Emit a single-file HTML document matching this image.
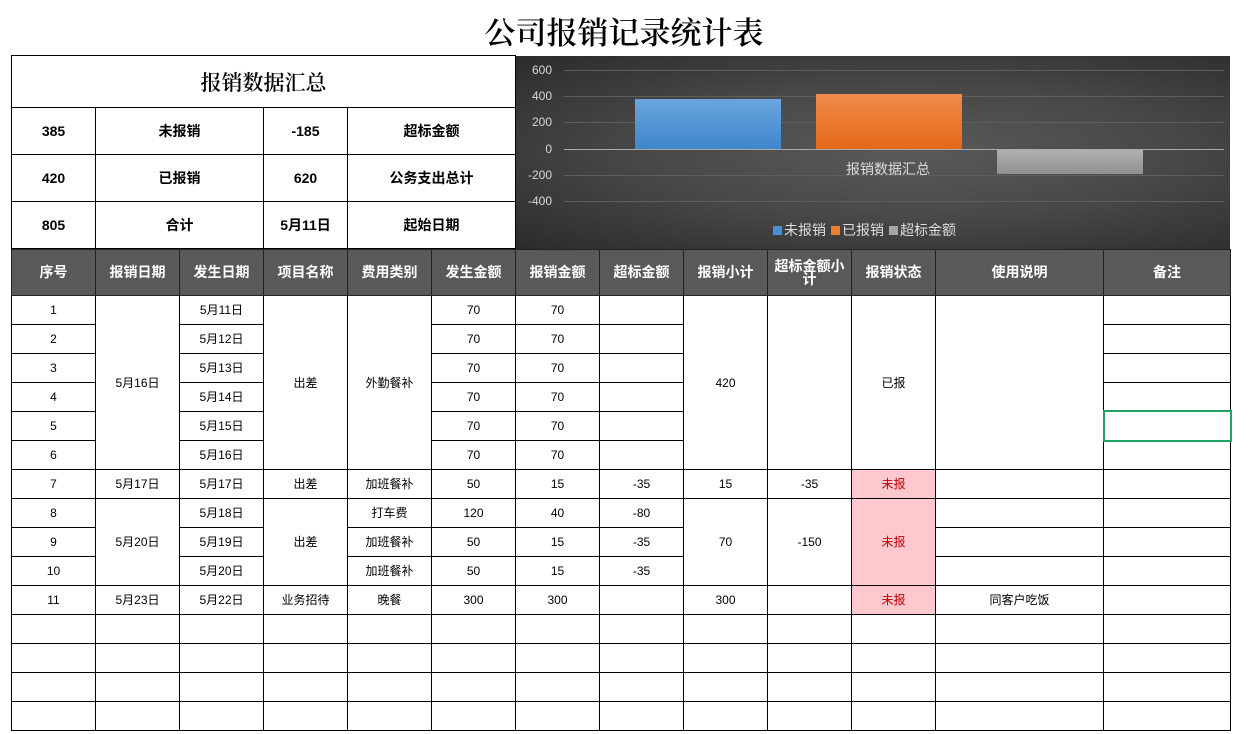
<!DOCTYPE html>
<html><head><meta charset="utf-8"><style>
body{margin:0;width:1248px;height:734px;overflow:hidden;background:#fff;font-family:"Liberation Sans","Noto Sans CJK SC",sans-serif;position:relative}
.title{position:absolute;left:0;width:1248px;top:8px;text-align:center;font-family:"Liberation Serif","Noto Serif CJK SC",serif;font-size:31px;font-weight:600;color:#000}
table{border-collapse:collapse;table-layout:fixed;position:absolute}
td{border:1px solid #000;text-align:center;padding:0;font-size:12px;color:#000;overflow:hidden}
#sum{left:11px;top:55px;width:505px}
#sum td{font-weight:bold;font-size:14px}
#sum .h{font-size:21px;font-family:"Liberation Serif","Noto Serif CJK SC",serif;font-weight:600}
#main{left:11px;top:249px;width:1220px}
#main tr.hd td{background:#595959;color:#fff;font-weight:bold;font-size:14px;border-color:#222;line-height:13px}
#main tr td{height:28px;line-height:14px}
.pk{background:#ffc7ce;color:#c00000}
#chart{position:absolute;left:516px;top:56px;width:714px;height:193px;background:radial-gradient(ellipse at 55% 50%,#5a5a5a 0%,#474747 50%,#2b2b2b 100%);overflow:hidden}
.gl{position:absolute;left:48px;right:6px;height:1px;background:#5e5e5e}
.yl{position:absolute;left:0;width:36px;text-align:right;color:#d8d8d8;font-size:12px}
.sel{position:absolute;left:1103px;top:410px;width:125px;height:28px;border:2px solid #21a366}
.lg{display:inline-block;width:9px;height:9px;margin:0 2px 0 5px}
</style></head><body>
<div class="title">公司报销记录统计表</div>
<table id="sum">
<colgroup><col style="width:84px"><col style="width:168px"><col style="width:84px"><col style="width:168px"></colgroup>
<tr><td colspan="4" class="h" style="height:51px">报销数据汇总</td></tr>
<tr><td style="height:46px">385</td><td>未报销</td><td>-185</td><td>超标金额</td></tr>
<tr><td style="height:46px">420</td><td>已报销</td><td>620</td><td>公务支出总计</td></tr>
<tr><td style="height:46px">805</td><td>合计</td><td>5月11日</td><td>起始日期</td></tr>
</table>
<div id="chart">
<div class="gl" style="top:14px"></div><div class="gl" style="top:40px"></div><div class="gl" style="top:66px"></div><div class="gl" style="top:93px;background:#aaa"></div><div class="gl" style="top:119px"></div><div class="gl" style="top:145px"></div>
<div class="yl" style="top:7px">600</div><div class="yl" style="top:33px">400</div><div class="yl" style="top:59px">200</div><div class="yl" style="top:86px">0</div><div class="yl" style="top:112px">-200</div><div class="yl" style="top:138px">-400</div>
<div style="position:absolute;left:119px;top:43px;width:146px;height:50px;background:linear-gradient(#6aa5de,#3f86cc)"></div>
<div style="position:absolute;left:300px;top:38px;width:146px;height:55px;background:linear-gradient(#f08a4b,#e46a17)"></div>
<div style="position:absolute;left:481px;top:94px;width:146px;height:24px;background:linear-gradient(#b0b0b0,#909090)"></div>
<div style="position:absolute;left:320px;top:103px;width:104px;text-align:center;color:#ddd;font-size:14px">报销数据汇总</div>
<div style="position:absolute;left:252px;top:164px;color:#ddd;font-size:14px;white-space:nowrap"><span class="lg" style="background:#4a8fd5"></span>未报销<span class="lg" style="background:#ed7d31"></span>已报销<span class="lg" style="background:#a5a5a5"></span>超标金额</div>
</div>
<table id="main">
<colgroup><col style="width:84px"><col style="width:84px"><col style="width:84px"><col style="width:84px"><col style="width:84px"><col style="width:84px"><col style="width:84px"><col style="width:84px"><col style="width:84px"><col style="width:84px"><col style="width:84px"><col style="width:168px"><col style="width:127px"></colgroup>
<tr class="hd"><td style="height:45px">序号</td><td>报销日期</td><td>发生日期</td><td>项目名称</td><td>费用类别</td><td>发生金额</td><td>报销金额</td><td>超标金额</td><td>报销小计</td><td>超标金额小计</td><td>报销状态</td><td>使用说明</td><td>备注</td></tr>
<tr><td>1</td><td rowspan="6">5月16日</td><td>5月11日</td><td rowspan="6">出差</td><td rowspan="6">外勤餐补</td><td>70</td><td>70</td><td></td><td rowspan="6">420</td><td rowspan="6"></td><td rowspan="6">已报</td><td rowspan="6"></td><td></td></tr>
<tr><td>2</td><td>5月12日</td><td>70</td><td>70</td><td></td><td></td></tr>
<tr><td>3</td><td>5月13日</td><td>70</td><td>70</td><td></td><td></td></tr>
<tr><td>4</td><td>5月14日</td><td>70</td><td>70</td><td></td><td></td></tr>
<tr><td>5</td><td>5月15日</td><td>70</td><td>70</td><td></td><td></td></tr>
<tr><td>6</td><td>5月16日</td><td>70</td><td>70</td><td></td><td></td></tr>
<tr><td>7</td><td>5月17日</td><td>5月17日</td><td>出差</td><td>加班餐补</td><td>50</td><td>15</td><td>-35</td><td>15</td><td>-35</td><td class="pk">未报</td><td></td><td></td></tr>
<tr><td>8</td><td rowspan="3">5月20日</td><td>5月18日</td><td rowspan="3">出差</td><td>打车费</td><td>120</td><td>40</td><td>-80</td><td rowspan="3">70</td><td rowspan="3">-150</td><td rowspan="3" class="pk">未报</td><td></td><td></td></tr>
<tr><td>9</td><td>5月19日</td><td>加班餐补</td><td>50</td><td>15</td><td>-35</td><td></td><td></td></tr>
<tr><td>10</td><td>5月20日</td><td>加班餐补</td><td>50</td><td>15</td><td>-35</td><td></td><td></td></tr>
<tr><td>11</td><td>5月23日</td><td>5月22日</td><td>业务招待</td><td>晚餐</td><td>300</td><td>300</td><td></td><td>300</td><td></td><td class="pk">未报</td><td>同客户吃饭</td><td></td></tr>
<tr><td></td><td></td><td></td><td></td><td></td><td></td><td></td><td></td><td></td><td></td><td></td><td></td><td></td></tr>
<tr><td></td><td></td><td></td><td></td><td></td><td></td><td></td><td></td><td></td><td></td><td></td><td></td><td></td></tr>
<tr><td></td><td></td><td></td><td></td><td></td><td></td><td></td><td></td><td></td><td></td><td></td><td></td><td></td></tr>
<tr><td></td><td></td><td></td><td></td><td></td><td></td><td></td><td></td><td></td><td></td><td></td><td></td><td></td></tr>
</table>
<div class="sel"></div>
</body></html>
